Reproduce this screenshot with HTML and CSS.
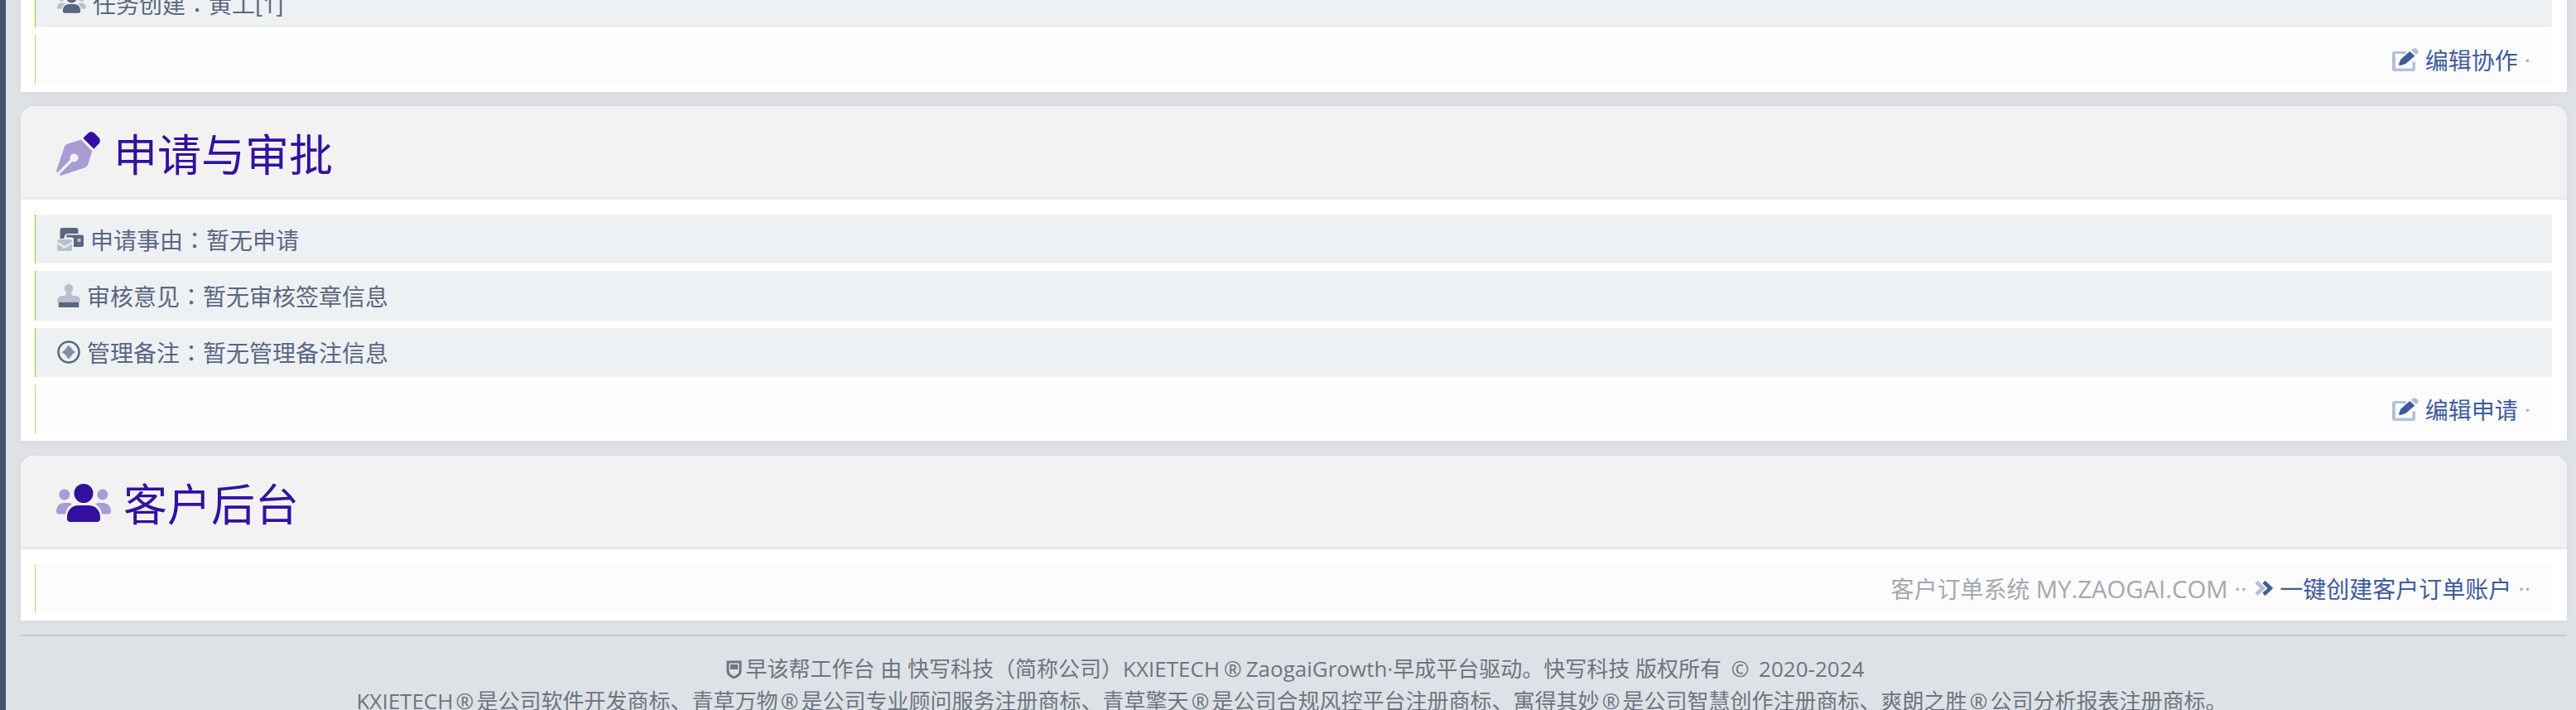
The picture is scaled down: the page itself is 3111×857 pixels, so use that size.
FILE: index.html
```html
<!DOCTYPE html>
<html lang="zh-CN">
<head>
    <title>早该帮工作台</title>
    <link rel="stylesheet" href="styles.css">
</head>
<body>

<div class="sidebar"></div>

<div class="content">

    <div class="card card-first">
        <div class="card-body">
            <div class="row">
                <svg class="row-icon icon-users-sm" viewBox="0 0 66 46">
                    <g class="lt">
                        <circle cx="9.8" cy="13" r="6.5"/>
                        <circle cx="55.8" cy="13" r="6.5"/>
                        <path d="M0 33c0-6 4-10 10-10h4c2 0 4 .5 5 1.500-4 2-7 6-8 12H3c-2 0-3-1.500-3-3.500zM66 33c0-6-4-10-10-10h-4c-2 0-4 .5-5 1.500 4 2 7 6 8 12h8c2 0 3-1.500 3-3.500z"/>
                    </g>
                    <g class="dk">
                        <circle cx="33" cy="11.500" r="11.500"/>
                        <path d="M13 40c0-8 6-14 14-14h12c8 0 14 6 14 14v2c0 2.500-1.500 4-4 4H17c-2.500 0-4-1.500-4-4z"/>
                    </g>
                </svg>
                <span>任务创建<span class="colon" lang="zh-TW">：</span>黄工[1]</span>
            </div>
            <div class="row row-foot">
                <a class="foot-link">
                    <svg class="edit-icon" viewBox="0 0 512 512" preserveAspectRatio="none">
                        <path class="link-lt" d="M471.600 21.700c-21.900-21.900-57.300-21.900-79.200 0L362.300 51.700l97.900 97.900 30.100-30.100c21.900-21.900 21.900-57.300 0-79.200z"/>
                        <path class="link-lt" d="M48 72H270v56H64V448H390V300h58v164c0 26-22 48-48 48H48c-26 0-48-22-48-48V120C0 94 22 72 48 72z"/>
                        <path class="link-dk" d="M172.400 241.700c-6.100 6.100-10.800 13.600-13.500 21.900l-29.600 88.800c-2.900 8.600-.6 18.100 5.800 24.600s15.900 8.700 24.600 5.800l88.800-29.600c8.200-2.700 15.700-7.400 21.900-13.500L437.700 172.300 339.700 74.300z"/>
                    </svg>
                    编辑协作
                </a>
                <span class="dots">·</span>
            </div>
        </div>
    </div>

    <div class="card">
        <div class="card-head">
            <svg class="head-icon icon-nib" viewBox="0 0 512 512">
                <path class="head-dk" d="M368.400 18.300L312.700 74.100 437.900 199.300l55.700-55.700c21.900-21.900 21.900-57.300 0-79.200L447.600 18.300c-21.900-21.900-57.300-21.900-79.200 0z"/>
                <path class="head-lt" d="M288 94.600l-9.200 2.800L134.700 140.600c-19.900 6-35.700 21.200-42.300 41L3.800 445.800c-3.800 11.300-1 23.900 7.300 32.400L164.700 324.700c-3-6.300-4.700-13.300-4.700-20.700c0-26.500 21.500-48 48-48s48 21.500 48 48s-21.500 48-48 48c-7.400 0-14.400-1.700-20.700-4.700L33.700 500.900c8.600 8.300 21.100 11.200 32.400 7.300l264.300-88.600c19.700-6.600 35-22.400 41-42.300l43.200-144.100 2.700-9.200L288 94.600z"/>
            </svg>
            <span class="head-title">申请与审批</span>
        </div>
        <div class="card-body">
            <div class="row">
                <svg class="row-icon icon-mail" viewBox="0 0 32 28">
                    <path class="dk" d="M6 0h17c1.500 0 2.500 1 2.500 2.500V7H13c-2.500 0-4.500 2-4.500 5v1H3.500V2.500C3.500 1 4.500 0 6 0z"/>
                    <path class="dk" d="M13 8.500h17c1 0 2 1 2 2V21c0 1-1 2-2 2H20v-9c0-1.500-1-2.500-2.500-2.500h-6.500c0-1.500 .8-3.500 2-3.500z"/>
                    <rect class="lt" x="24.500" y="13" width="4" height="4"/>
                    <path class="lt" d="M2 14h14c1 0 2 1 2 2v1l-9 5-9-5v-1c0-1 1-2 2-2zM0 19.500l9 5 9-5V26c0 1-1 2-2 2H2c-1 0-2-1-2-2z"/>
                </svg>
                <span>申请事由<span class="colon" lang="zh-TW">：</span>暂无申请</span>
            </div>
            <div class="row">
                <svg class="row-icon icon-stamp" viewBox="0 0 512 512" preserveAspectRatio="none">
                    <path class="lt" d="M312 201.800c0-17.400 9.200-33.200 19.900-47C344.500 138.500 352 118.100 352 96c0-53-43-96-96-96s-96 43-96 96c0 22.100 7.500 42.500 20.100 58.800c10.700 13.800 19.900 29.600 19.900 47c0 29.900-24.300 54.200-54.200 54.200H112C50.100 256 0 306.100 0 368c0 17.700 14.300 32 32 32H480c17.700 0 32-14.300 32-32c0-61.900-50.100-112-112-112H366.200c-29.900 0-54.200-24.300-54.200-54.200z"/>
                    <rect class="dk" x="32" y="400" width="448" height="112"/>
                </svg>
                <span>审核意见<span class="colon" lang="zh-TW">：</span>暂无审核签章信息</span>
            </div>
            <div class="row">
                <svg class="row-icon icon-wave" viewBox="0 0 28 28">
                    <circle class="wave-ring" cx="14" cy="14" r="12.500"/>
                    <path class="wave-bars" d="M7 13v2M8.700 12v4M10.400 10v8M12.100 7.500v13M13.800 6v16M15.500 7.500v13M17.200 9.500v9M18.900 11.500v5M20.600 13v2"/>
                </svg>
                <span>管理备注<span class="colon" lang="zh-TW">：</span>暂无管理备注信息</span>
            </div>
            <div class="row row-foot">
                <a class="foot-link">
                    <svg class="edit-icon" viewBox="0 0 512 512" preserveAspectRatio="none">
                        <path class="link-lt" d="M471.600 21.700c-21.900-21.900-57.300-21.900-79.200 0L362.300 51.700l97.900 97.900 30.100-30.100c21.900-21.900 21.900-57.300 0-79.200z"/>
                        <path class="link-lt" d="M48 72H270v56H64V448H390V300h58v164c0 26-22 48-48 48H48c-26 0-48-22-48-48V120C0 94 22 72 48 72z"/>
                        <path class="link-dk" d="M172.400 241.700c-6.100 6.100-10.800 13.600-13.500 21.900l-29.600 88.800c-2.900 8.600-.6 18.100 5.800 24.600s15.900 8.700 24.600 5.800l88.800-29.600c8.200-2.700 15.700-7.400 21.900-13.500L437.700 172.300 339.700 74.300z"/>
                    </svg>
                    编辑申请
                </a>
                <span class="dots">·</span>
            </div>
        </div>
    </div>

    <div class="card">
        <div class="card-head card-head-users">
            <svg class="head-icon icon-users" viewBox="0 0 66 46">
                <g class="head-lt">
                    <circle cx="9.800" cy="13" r="6.500"/>
                    <circle cx="55.800" cy="13" r="6.500"/>
                    <path d="M0 33c0-6 4-10 10-10h4c2 0 4 .5 5 1.500-4 2-7 6-8 12H3c-2 0-3-1.500-3-3.500zM66 33c0-6-4-10-10-10h-4c-2 0-4 .5-5 1.500 4 2 7 6 8 12h8c2 0 3-1.500 3-3.500z"/>
                </g>
                <g class="head-dk">
                    <circle cx="33" cy="11.500" r="11.500"/>
                    <path d="M13 40c0-8 6-14 14-14h12c8 0 14 6 14 14v2c0 2.500-1.500 4-4 4H17c-2.500 0-4-1.500-4-4z"/>
                </g>
            </svg>
            <span class="head-title">客户后台</span>
        </div>
        <div class="card-body">
            <div class="row row-foot">
                <span class="muted">客户订单系统 <span class="latin">MY.ZAOGAI.COM</span></span>
                <span class="dots dots-wide">··</span>
                <a class="foot-link">
                    <svg class="chevron-icon" viewBox="0 0 23 18">
                        <path class="chev-lt" d="M3 1.500l8 7.500-8 7.500"/>
                        <path class="chev-dk" d="M12 1.500l8 7.500-8 7.500"/>
                    </svg>
                    一键创建客户订单账户
                </a>
                <span class="dots">··</span>
            </div>
        </div>
    </div>

    <div class="page-foot">
        <div class="foot-line foot-line-first">
            <svg class="shield-icon" viewBox="0 0 19 22">
                <path class="shield-line" d="M2 2h15v11c0 4-3 6-7.500 8C5 19 2 17 2 13z"/>
                <rect class="shield-fill" x="5" y="5" width="9" height="6"/>
            </svg>早该帮工作台 由 快写科技（简称公司）KXIETECH<span class="mark">®</span>ZaogaiGrowth·早成平台驱动。快写科技 版权所有 <span class="mark">©</span> 2020-2024
        </div>
        <div class="foot-line foot-line-second">KXIETECH<span class="mark">®</span>是公司软件开发商标、青草万物<span class="mark">®</span>是公司专业顾问服务注册商标、青草擎天<span class="mark">®</span>是公司合规风控平台注册商标、寓得其妙<span class="mark">®</span>是公司智慧创作注册商标、爽朗之胜<span class="mark">®</span>公司分析报表注册商标。</div>
    </div>

</div>

</body>
</html>
```
FILE: styles.css
```css
html, body {
    height: 857px;
    overflow: hidden;
}

body {
    font-family: 'Open Sans', 'Noto Sans CJK SC', sans-serif;
    background-color: #dee2e6;
    color: #5a6782;
    margin: 0;
    padding: 0;
    display: flex;
}

.sidebar {
    width: 7px;
    flex-shrink: 0;
    background-color: #44546a;
}

.content {
    flex-grow: 1;
    min-width: 0;
    padding: 0 11px 0 18px;
    display: flex;
    flex-direction: column;
    gap: 17.33px;
}

.card {
    background-color: #fff;
    border-radius: 16px 16px 0 0;
    box-shadow: 0 0 10px rgba(0, 0, 0, 0.05);
}

.card-first {
    margin-top: -26px;
    border-radius: 0;
}

.card-head {
    height: 113px;
    box-sizing: border-box;
    padding: 2px 0 0 43px;
    display: flex;
    align-items: center;
    gap: 16px;
    background-color: #f2f2f2;
    border-radius: 16px 16px 0 0;
    box-shadow: inset 0 -5px 5px -4px rgba(0, 0, 0, 0.08);
}

.card-head-users {
    gap: 15px;
}

.head-title {
    padding-top: 3px;
    font-size: 53px;
    line-height: 60px;
    color: #33109f;
}

.icon-nib {
    width: 53px;
    height: 53px;
}

.icon-users {
    width: 66px;
    height: 46px;
}

.head-dk {
    fill: #33109f;
}

.head-lt {
    fill: #a99bd3;
}

.card-body {
    padding: 18px 18px 9px 17px;
    display: flex;
    flex-direction: column;
    gap: 9px;
}

.card-first .card-body {
    padding-top: 0;
}

.row {
    height: 59.33px;
    box-sizing: border-box;
    display: flex;
    align-items: center;
    gap: 8px;
    padding-left: 26px;
    font-size: 28px;
    background-color: #eef1f4;
    border-left: 1px solid #99cc00;
}

.row-foot {
    justify-content: flex-end;
    gap: 0;
    padding-right: 26px;
    background-color: #fcfcfc;
    border-left-color: #c5d27a;
}

.row-icon {
    flex-shrink: 0;
}

.icon-users-sm {
    width: 35px;
    height: 25px;
}

.icon-mail {
    width: 32px;
    height: 28px;
}

.icon-stamp,
.icon-wave {
    width: 28px;
    height: 28px;
}

.dk {
    fill: #5a6782;
}

.lt {
    fill: #b9c0cd;
}

.wave-ring {
    fill: none;
    stroke: #5a6782;
    stroke-width: 2.5;
}

.wave-bars {
    fill: none;
    stroke: #5a6782;
    stroke-width: 1.2;
}

.colon {
    font-family: 'Noto Sans CJK TC', sans-serif;
}

.foot-link {
    display: flex;
    align-items: center;
    gap: 8px;
    color: #3f5b9b;
}

.edit-icon {
    width: 32px;
    height: 28px;
}

.link-lt {
    fill: #b4c0da;
}

.link-dk {
    fill: #3f5b9b;
}

.chevron-icon {
    width: 23px;
    height: 18px;
}

.chev-lt,
.chev-dk {
    fill: none;
    stroke-width: 4.500;
}

.chev-lt {
    stroke: #b4c0da;
}

.chev-dk {
    stroke: #3f5b9b;
}

.muted {
    color: #a3a8b2;
}

.latin {
    font-size: 29.300px;
}

.dots {
    margin-left: 8px;
    color: #a3a8b2;
}

.dots-wide {
    margin-right: 9px;
}

.page-foot {
    border-top: 2px solid #c5c8d4;
    padding-top: 20px;
    font-size: 26px;
    line-height: 39px;
    color: #6d7580;
    text-align: center;
}

.foot-line {
    white-space: nowrap;
}

.foot-line-first {
    padding-left: 3px;
}

.foot-line-second {
    padding-right: 5px;
}

.mark {
    margin: 0 5px;
}

.foot-line-second .mark {
    margin: 0 3.200px;
}

.shield-icon {
    width: 19px;
    height: 22px;
    margin-right: 5px;
    vertical-align: -2px;
}

.shield-line {
    fill: none;
    stroke: #6d7580;
    stroke-width: 3;
}

.shield-fill {
    fill: #6d7580;
}
```
